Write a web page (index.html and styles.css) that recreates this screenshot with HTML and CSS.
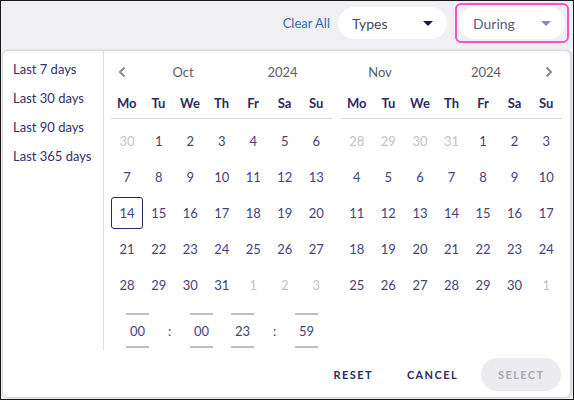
FILE: index.html
```html
<!DOCTYPE html>
<html>
<head>
<meta charset="utf-8">
<link rel="stylesheet" href="styles.css">
</head>
<body>
<div class="frame">
  <div class="topbar">
    <a class="clear">Clear All</a>
    <div class="pill types"><span>Types</span><span class="caret dark"></span></div>
    <div class="focus-ring">
      <div class="pill during"><span>During</span><span class="caret light"></span></div>
    </div>
  </div>
  <div class="panel">
    <div class="panel-body">
      <ul class="presets">
        <li>Last 7 days</li>
        <li>Last 30 days</li>
        <li>Last 90 days</li>
        <li>Last 365 days</li>
      </ul>
      <div class="calendars">
        <div class="cal">
          <div class="cal-head head-left">
            <span class="nav"><svg width="8" height="12" viewBox="0 0 8 12"><path d="M6.5 1.5L2 6l4.5 4.5" fill="none" stroke="#8a8a94" stroke-width="2"/></svg></span>
            <span class="month">Oct</span>
            <span class="year">2024</span>
          </div>
          <div class="weekdays"><span>Mo</span><span>Tu</span><span>We</span><span>Th</span><span>Fr</span><span>Sa</span><span>Su</span></div>
          <div class="days">
            <span class="off">30</span><span>1</span><span>2</span><span>3</span><span>4</span><span>5</span><span>6</span>
            <span>7</span><span>8</span><span>9</span><span>10</span><span>11</span><span>12</span><span>13</span>
            <span class="today">14</span><span>15</span><span>16</span><span>17</span><span>18</span><span>19</span><span>20</span>
            <span>21</span><span>22</span><span>23</span><span>24</span><span>25</span><span>26</span><span>27</span>
            <span>28</span><span>29</span><span>30</span><span>31</span><span class="off">1</span><span class="off">2</span><span class="off">3</span>
          </div>
          <div class="time">
            <span class="tin">00</span><span class="colon">:</span><span class="tin">00</span>
            <span class="tgap"></span>
            <span class="tin">23</span><span class="colon">:</span><span class="tin">59</span>
          </div>
        </div>
        <div class="cal">
          <div class="cal-head head-right">
            <span class="month">Nov</span>
            <span class="year">2024</span>
            <span class="nav"><svg width="8" height="12" viewBox="0 0 8 12"><path d="M1.5 1.5L6 6l-4.5 4.5" fill="none" stroke="#8a8a94" stroke-width="2"/></svg></span>
          </div>
          <div class="weekdays"><span>Mo</span><span>Tu</span><span>We</span><span>Th</span><span>Fr</span><span>Sa</span><span>Su</span></div>
          <div class="days">
            <span class="off">28</span><span class="off">29</span><span class="off">30</span><span class="off">31</span><span>1</span><span>2</span><span>3</span>
            <span>4</span><span>5</span><span>6</span><span>7</span><span>8</span><span>9</span><span>10</span>
            <span>11</span><span>12</span><span>13</span><span>14</span><span>15</span><span>16</span><span>17</span>
            <span>18</span><span>19</span><span>20</span><span>21</span><span>22</span><span>23</span><span>24</span>
            <span>25</span><span>26</span><span>27</span><span>28</span><span>29</span><span>30</span><span class="off">1</span>
          </div>
        </div>
      </div>
    </div>
    <div class="footer">
      <button class="btn">RESET</button>
      <button class="btn">CANCEL</button>
      <button class="btn select">SELECT</button>
    </div>
  </div>
</div>
</body>
</html>
```
FILE: styles.css
```css
* { box-sizing: border-box; }
html, body { margin: 0; padding: 0; }
body {
  font-family: "Lato", "Liberation Sans", sans-serif;
  font-size: 13px;
  color: #45437a;
}
.frame {
  width: 574px;
  height: 400px;
  border: 1px solid #1a1a1a;
  background: #efeff4;
  display: flex;
  flex-direction: column;
}
.topbar {
  height: 44px;
  margin-bottom: 5px;
  display: flex;
  justify-content: flex-end;
  align-items: center;
  gap: 8px;
  padding-right: 4px;
}
.clear {
  color: #2f6db3;
  font-size: 13px;
}
.pill {
  background: #fff;
  border-radius: 16px;
  height: 32px;
  display: flex;
  align-items: center;
  justify-content: space-between;
  padding: 0 14px;
  font-size: 14px;
}
.types { width: 109px; color: #444766; }
.focus-ring {
  border: 2px solid #f552cc;
  border-radius: 6px;
  padding: 2px;
  width: 114px;
}
.during { width: 106px; color: #5b5a7a; }
.caret {
  width: 0; height: 0;
  border-left: 5px solid transparent;
  border-right: 5px solid transparent;
  border-top: 5px solid #1c1a3a;
}
.caret.light { border-top-color: #8b8ba3; }
.panel {
  margin: 0 2px 1px 1px;
  flex: 1;
  background: #fff;
  border: 1px solid #d9d9de;
  border-radius: 6px;
  box-shadow: 1px 0 2px rgba(0,0,0,0.12);
  display: flex;
  flex-direction: column;
}
.panel-body {
  display: flex;
  height: 299px;
}
.presets {
  list-style: none;
  margin: 0;
  padding: 4px 0 0 10px;
  width: 101px;
  border-right: 1px solid #dcdce0;
}
.presets li {
  height: 29px;
  line-height: 29px;
  color: #33306a;
  white-space: nowrap;
}
.calendars {
  display: flex;
  gap: 9px;
  padding: 6px 0 0 7px;
}
.cal { width: 221px; }
.cal-head {
  display: grid;
  height: 30px;
  align-items: center;
  text-align: center;
  color: #5c5c66;
}
.head-left { grid-template-columns: 22px 100px 99px; }
.head-right { grid-template-columns: 78px 134px 9px; }
.cal-head .nav { display: flex; align-items: center; justify-content: center; }
.head-right .nav { justify-content: flex-start; margin-left: -8px; }
.weekdays, .days {
  display: grid;
  grid-template-columns: repeat(7, 1fr);
  text-align: center;
}
.weekdays {
  align-items: center;
  font-weight: 700;
  color: #2d2a64;
  border-bottom: 1px solid #dcdce0;
  margin-bottom: 4px;
  height: 32px;
}
.days span {
  height: 36px;
  display: flex;
  align-items: center;
  justify-content: center;
}
.days .off { color: #c2c2ca; }
.days .today {
  width: 32px;
  height: 32px;
  margin: 2px 0;
  border: 1px solid #2a2760;
  border-radius: 3px;
}
.time {
  display: flex;
  align-items: center;
  padding: 10px 0 0 15px;
}
.tin {
  width: 23px;
  height: 35px;
  border-top: 2px solid #bbbfca;
  border-bottom: 2px solid #bbbfca;
  display: flex;
  align-items: center;
  justify-content: center;
}
.colon { width: 41px; text-align: center; }
.tgap { width: 18px; }
.footer {
  flex: 1;
  display: flex;
  justify-content: flex-end;
  align-items: center;
  padding: 2px 9px 0 0;
}
.btn {
  font-family: inherit;
  font-size: 11px;
  font-weight: 700;
  letter-spacing: 1.4px;
  color: #2d2a64;
  background: none;
  border: none;
  height: 33px;
  padding: 0 17px;
  border-radius: 17px;
}
.btn.select {
  margin-left: 6px;
  background: #ebebf0;
  color: #a9a9b3;
  width: 80px;
}
```
